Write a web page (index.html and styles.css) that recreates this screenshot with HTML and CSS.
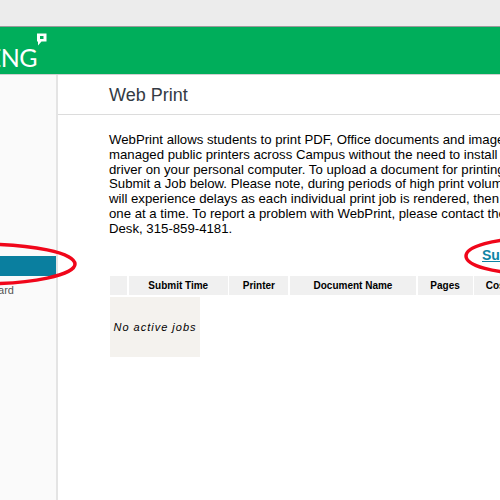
FILE: index.html
```html
<!DOCTYPE html>
<html lang="en">
<head>
<meta charset="utf-8">
<title>Web Print</title>
<link rel="stylesheet" href="styles.css">
</head>
<body>
<div class="topbar"></div>
<header class="brand">
  <div class="logo"><span class="logo-text">ENG</span><svg class="logo-mark" width="11" height="13" viewBox="0 0 11 13"><path fill="#fff" fill-rule="evenodd" d="M1 0.500H10.500V8.500H5.500L2 12.500V8.500H1ZM4 3V6H7.500V3Z"/></svg></div>
</header>
<div class="layout">
  <aside class="sidebar">
    <div class="nav-active"></div>
    <div class="nav-item"><span>Dashboard</span></div>
  </aside>
  <main class="main">
    <h1 class="title">Web Print</h1>
    <div class="content">
      <p class="intro">WebPrint allows students to print PDF, Office documents and images to<br>managed public printers across Campus without the need to install a print<br>driver on your personal computer. To upload a document for printing, click<br>Submit a Job below. Please note, during periods of high print volume, you<br>will experience delays as each individual print job is rendered, then printed<br>one at a time. To report a problem with WebPrint, please contact the Help<br>Desk, 315-859-4181.</p>
      <div class="actions"><a class="submit" href="#">Submit a Job »</a></div>
      <div class="jobs-head">
        <div class="col c0"></div>
        <div class="col c1">Submit Time</div>
        <div class="col c2">Printer</div>
        <div class="col c3">Document Name</div>
        <div class="col c4">Pages</div>
        <div class="col c5">Cost</div>
      </div>
      <div class="empty">No active jobs</div>
    </div>
  </main>
</div>
<svg class="ring ring-left" width="90" height="46" viewBox="0 0 90 46"><ellipse cx="-20" cy="23" rx="95" ry="20" fill="none" stroke="#f0061a" stroke-width="3.500"/></svg>
<svg class="ring ring-right" width="40" height="44" viewBox="0 0 40 44"><ellipse cx="70" cy="22" rx="64" ry="17.500" fill="none" stroke="#f0061a" stroke-width="3.500"/></svg>
</body>
</html>
```
FILE: styles.css
```css
* { box-sizing: border-box; }
html, body { margin: 0; width: 500px; height: 500px; overflow: hidden; background: #fff; }
body { font-family: "Liberation Sans", Arial, sans-serif; color: #000; position: relative; }
.topbar { height: 27px; background: #ececec; border-bottom: 1px solid #9a9a9a; }
.brand { height: 48px; background: #00ae5b; border-bottom: 1px solid #d0d0d0; position: relative; }
.logo { position: relative; width: 47px; height: 47px; overflow: hidden; }
.logo-text { position: absolute; right: 10px; top: 16px; font-family: Lato, sans-serif; font-weight: 400; font-size: 25px; line-height: 28px; letter-spacing: -0.500px; color: #fff; }
.logo-mark { position: absolute; left: 36px; top: 6px; }
.layout { display: flex; height: 425px; }
.sidebar { width: 58px; flex: none; background: #fafafa; border-right: 2px solid #e4e4e4; padding-top: 181px; overflow: hidden; }
.nav-active { height: 20px; background: #0a7f9f; }
.nav-item { display: flex; justify-content: flex-end; font-size: 11px; line-height: 14px; color: #555; padding-top: 7px; width: 14px; }
.nav-item span { flex: none; }
.main { flex: 1; min-width: 0; overflow: hidden; }
.title { margin: 0; height: 40px; padding: 9px 0 0 51px; font-size: 18px; line-height: 22px; font-weight: 400; color: #333a44; border-bottom: 1px solid #dcdcdc; }
.content { width: 460px; padding: 18px 0 0 51px; }
.intro { margin: 0; font-size: 13.200px; line-height: 14.800px; white-space: nowrap; }
.actions { padding: 9px 0 0 373px; height: 39.400px; }
.submit { font-size: 14px; line-height: 15px; font-weight: 700; color: #0d84a5; text-decoration: underline; white-space: nowrap; }
.jobs-head { display: flex; gap: 1.600px; margin-left: 1.200px; width: 500px; }
.col { height: 19px; background: #f0f0f0; font-size: 10px; line-height: 19px; font-weight: 700; text-align: center; flex: none; }
.c0 { width: 17px; }
.c1 { width: 99px; }
.c2 { width: 59px; }
.c3 { width: 126px; }
.c4 { width: 55px; }
.c5 { width: 60px; text-align: left; padding-left: 11.500px; }
.empty { width: 90px; height: 60px; margin: 2px 0 0 1px; background: #f4f2ee; font-size: 11px; font-style: italic; letter-spacing: 1px; line-height: 60px; text-align: center; white-space: nowrap; }
.ring { position: absolute; }
.ring-left { left: 0; top: 241px; }
.ring-right { left: 460px; top: 234px; }
```
